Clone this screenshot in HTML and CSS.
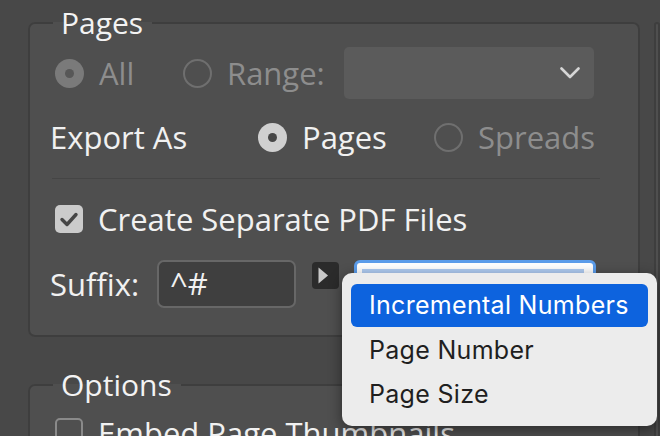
FILE: index.html
```html
<!DOCTYPE html>
<html lang="en">
<head>
    <meta charset="UTF-8">
    <title>Export PDF</title>
    <link rel="stylesheet" href="styles.css">
</head>
<body>

    <!-- Dialog body -->
    <div class="dialog">
        <div class="main-col">

            <!-- Pages group -->
            <fieldset class="group group-pages">
                <legend>Pages</legend>

                <div class="row">
                    <label class="option opt-all is-disabled"><span class="radio radio-on"></span>All</label>
                    <label class="option opt-range is-disabled"><span class="radio"></span>Range:</label>
                    <div class="select">
                        <svg width="20" height="12" viewBox="0 0 20 12"><path d="M1.5 1.5 L10 10 L18.5 1.5" fill="none" stroke="#d6d6d6" stroke-width="2.6" stroke-linecap="round" stroke-linejoin="round"/></svg>
                    </div>
                </div>

                <div class="row row-export">
                    <span class="row-label export-label">Export As</span>
                    <label class="option opt-pages"><span class="radio radio-on"></span>Pages</label>
                    <label class="option is-disabled"><span class="radio"></span>Spreads</label>
                </div>

                <hr class="divider">

                <label class="row check-row">
                    <span class="checkbox is-checked">
                        <svg width="28" height="28" viewBox="0 0 28 28"><path d="M7 14.5 L12 19.5 L21 9.5" fill="none" stroke="#464646" stroke-width="3.4" stroke-linecap="round" stroke-linejoin="round"/></svg>
                    </span>
                    Create Separate PDF Files
                </label>

                <div class="row row-suffix">
                    <span class="row-label suffix-label">Suffix:</span>
                    <div class="text-field">^#</div>
                    <button class="insert-btn" type="button">
                        <svg width="27" height="27" viewBox="0 0 27 27"><polygon points="6.5,5.5 16,13.5 6.5,21.5" fill="#c9c9c9"/></svg>
                    </button>
                    <div class="token-field"><span class="token-sel"></span></div>
                </div>
            </fieldset>

            <!-- Options group -->
            <fieldset class="group group-options">
                <legend>Options</legend>
                <label class="row check-row check-row-top"><span class="checkbox"></span>Embed Page Thumbnails</label>
            </fieldset>
        </div>

        <!-- Neighbouring panel, only its edge shows -->
        <div class="side-panel"></div>
    </div>

    <!-- Open suffix menu -->
    <ul class="menu">
        <li class="menu-item is-active">Incremental Numbers</li>
        <li class="menu-item">Page Number</li>
        <li class="menu-item">Page Size</li>
    </ul>

</body>
</html>
```

FILE: styles.css
```css
/* Page */
body {
    margin: 0;
    width: 660px;
    height: 436px;
    overflow: hidden;
    position: relative;
    background-color: #484848;
    font-family: "Open Sans", "DejaVu Sans", sans-serif;
    font-size: 31px;
    color: #f1f1f1;
}

.dialog {
    display: flex;
    gap: 14px;
    padding-left: 28px;
}

.main-col {
    width: 612px;
    flex: none;
}

/* Group boxes */
.group {
    box-sizing: border-box;
    width: 612px;
    margin: 8px 0 0 0;
    padding: 9px 20px 27px 20px;
    border: 2px solid #3e3e3e;
    border-radius: 7px;
    background-color: #4f4f4f;
    min-width: 0;
}

.group legend {
    font-size: 30px;
    line-height: 30px;
    padding: 0 9px 0 8px;
    margin-left: 3px;
    color: #f3f3f3;
}

.group-options {
    margin-top: 33px;
    padding-top: 18px;
}

/* Rows */
.row {
    display: flex;
    align-items: center;
    height: 52px;
    line-height: 30px;
}

.row-export {
    margin-top: 12px;
}

.row-label {
    flex: none;
}

.export-label {
    width: 208px;
}

.suffix-label {
    width: 107px;
}

/* Radio options */
.option {
    display: flex;
    align-items: center;
    gap: 15px;
    flex: none;
}

.opt-all {
    width: 128px;
    margin-left: 5px;
}

.opt-range {
    width: 161px;
}

.opt-pages {
    width: 176px;
}

.is-disabled {
    color: #8d8d8d;
}

.radio {
    box-sizing: border-box;
    width: 29px;
    height: 29px;
    border-radius: 50%;
    border: 2px solid #6f6f6f;
    display: flex;
    align-items: center;
    justify-content: center;
    flex: none;
}

.radio-on {
    border: none;
    background-color: #d0d0d0;
}

.radio-on::after {
    content: "";
    width: 9px;
    height: 9px;
    border-radius: 50%;
    background-color: #474747;
}

.is-disabled .radio-on {
    background-color: #7a7a7a;
}

.is-disabled .radio-on::after {
    background-color: #575757;
}

/* Dropdown */
.select {
    box-sizing: border-box;
    width: 250px;
    height: 52px;
    border-radius: 5px;
    background-color: #5b5b5b;
    display: flex;
    align-items: center;
    justify-content: flex-end;
    padding-right: 14px;
}

/* Separator */
.divider {
    width: 548px;
    height: 0;
    margin: 15px 0 0 2px;
    border: 0;
    border-top: 1px solid #454545;
}

/* Checkboxes */
.check-row {
    margin-top: 20px;
    height: 40px;
    gap: 15px;
}

.checkbox {
    box-sizing: border-box;
    width: 28px;
    height: 28px;
    margin-left: 5px;
    border-radius: 5px;
    border: 2px solid #8a8a8a;
    flex: none;
}

.checkbox.is-checked {
    border: none;
    background-color: #cbcbcb;
}

.check-row-top {
    margin-top: 0;
    align-items: flex-start;
}

/* Suffix row */
.row-suffix {
    margin-top: 21px;
    height: 48px;
}

.text-field {
    box-sizing: border-box;
    width: 139px;
    height: 48px;
    border: 2px solid #676767;
    border-radius: 7px;
    background-color: #3f3f3f;
    padding-left: 11px;
    line-height: 42px;
    flex: none;
}

.insert-btn {
    width: 27px;
    height: 27px;
    padding: 0;
    margin-left: 16px;
    align-self: flex-start;
    margin-top: 2px;
    border: none;
    border-radius: 4px;
    background-color: #2b2b2b;
    flex: none;
}

.insert-btn svg {
    display: block;
}

.token-field {
    box-sizing: border-box;
    width: 242px;
    height: 48px;
    margin-left: 15px;
    padding: 6px 9px 0 5px;
    border: 3px solid #5b9cea;
    border-radius: 6px;
    background-color: #ffffff;
    display: flex;
    flex: none;
}

.token-sel {
    flex: 1;
    background-color: #b0cdf3;
}

/* Neighbouring panel */
.side-panel {
    flex: 1;
    margin-top: 22px;
    height: 420px;
    border: 2px solid #3e3e3e;
    border-radius: 7px;
    background-color: #4f4f4f;
}

/* Popup menu */
.menu {
    position: absolute;
    left: 342px;
    top: 273px;
    box-sizing: border-box;
    width: 315px;
    height: 153px;
    margin: 0;
    padding: 11px 9px 10px 9px;
    list-style: none;
    border-radius: 10px;
    background-color: #ececec;
    box-shadow: 0 4px 14px rgba(0, 0, 0, 0.45);
    font-family: Inter, "Noto Sans", sans-serif;
    font-size: 25px;
    letter-spacing: 0.3px;
    color: #1f1f1f;
}

.menu-item {
    height: 44px;
    line-height: 44px;
    padding-left: 18px;
    border-radius: 6px;
}

.menu-item.is-active {
    height: 43px;
    line-height: 43px;
    margin-bottom: 1px;
    background-color: #0d63de;
    color: #ffffff;
}
```
